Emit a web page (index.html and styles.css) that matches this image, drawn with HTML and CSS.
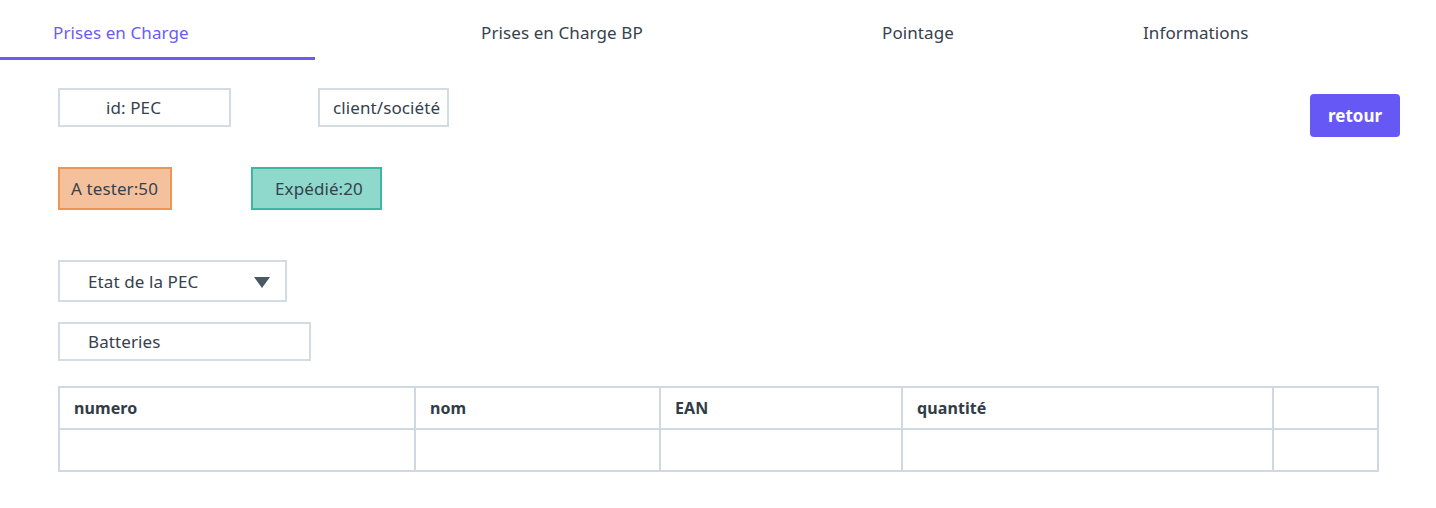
FILE: index.html
```html
<!DOCTYPE html>
<html lang="fr">
<head>
<meta charset="utf-8">
<title>Prises en Charge</title>
<link rel="stylesheet" href="styles.css">
</head>
<body>
<nav class="tabs">
  <div class="tab tab-active">Prises en Charge</div>
  <div class="tab tab-2">Prises en Charge BP</div>
  <div class="tab tab-3">Pointage</div>
  <div class="tab tab-4">Informations</div>
</nav>
<main class="content">
  <div class="row-top">
    <div class="field field-id">id: PEC</div>
    <div class="field field-client">client/société</div>
    <button class="btn-retour">retour</button>
  </div>
  <div class="row-badges">
    <div class="badge badge-orange">A tester:50</div>
    <div class="badge badge-teal">Expédié:20</div>
  </div>
  <div class="select">
    <span>Etat de la PEC</span>
    <svg class="caret" width="16" height="11" viewBox="0 0 16 11"><path d="M0 0H16L8 11Z" fill="#4a5866"/></svg>
  </div>
  <div class="field field-batt">Batteries</div>
  <table class="grid">
    <colgroup>
      <col class="c1"><col class="c2"><col class="c3"><col class="c4"><col class="c5">
    </colgroup>
    <thead>
      <tr><th>numero</th><th>nom</th><th>EAN</th><th>quantité</th><th></th></tr>
    </thead>
    <tbody>
      <tr><td></td><td></td><td></td><td></td><td></td></tr>
    </tbody>
  </table>
</main>
</body>
</html>
```
FILE: styles.css
```css
* { box-sizing: border-box; }
body {
  margin: 0;
  font-family: "Noto Sans", Roboto, sans-serif;
  font-size: 17px;
  letter-spacing: 0.1px;
  color: #36414d;
  background: #fff;
}
.tabs {
  display: flex;
  height: 60px;
}
.tab {
  line-height: 20px;
  padding-top: 23px;
  color: #36414d;
  white-space: nowrap;
}
.tab-active {
  width: 315px;
  padding-left: 53px;
  color: #6b5cf0;
  border-bottom: 3px solid #6b5cf0;
}
.tab-2 { width: 567px; padding-left: 166px; }
.tab-3 { width: 261px; }
.tab-4 { flex: 1; }

.content {
  padding: 28px 58px 0 58px;
}
.row-top {
  display: flex;
  align-items: flex-start;
  height: 79px;
}
.field {
  border: 2px solid #d3dbe3;
  height: 39px;
  line-height: 35px;
  white-space: nowrap;
  overflow: hidden;
}
.field-id { width: 173px; padding-left: 46px; }
.field-client { width: 131px; padding-left: 13px; margin-left: 87px; }
.btn-retour {
  margin-left: auto;
  margin-right: -22px;
  margin-top: 6px;
  width: 90px;
  height: 43px;
  border: none;
  border-radius: 4px;
  background: #6658f5;
  color: #fff;
  font-family: inherit;
  font-size: 17px;
  font-weight: 700;
}
.row-badges {
  display: flex;
  gap: 79px;
  height: 93px;
}
.badge {
  height: 43px;
  border: 2px solid;
  line-height: 39px;
}
.badge-orange {
  width: 114px;
  padding-left: 11px;
  background: #f5c19d;
  border-color: #ee9551;
}
.badge-teal {
  width: 131px;
  padding-left: 22px;
  background: #8fd8cc;
  border-color: #3bb7a2;
}
.select {
  display: flex;
  align-items: center;
  justify-content: space-between;
  width: 229px;
  height: 42px;
  border: 2px solid #d3dbe3;
  padding: 0 15px 0 28px;
  margin-bottom: 20px;
}
.caret { margin-top: 3px; }
.field-batt { width: 253px; padding-left: 28px; }
.grid {
  margin-top: 25px;
  width: 1319px;
  border-collapse: collapse;
  table-layout: fixed;
}
.c1 { width: 356px; }
.c2 { width: 245px; }
.c3 { width: 242px; }
.c4 { width: 371px; }
.c5 { width: 105px; }
.grid th, .grid td {
  border: 2px solid #d0d9e2;
  height: 42px;
  padding: 0 14px;
  text-align: left;
  font-size: 16px;
}
.grid th { font-weight: 700; color: #323c47; }
```
